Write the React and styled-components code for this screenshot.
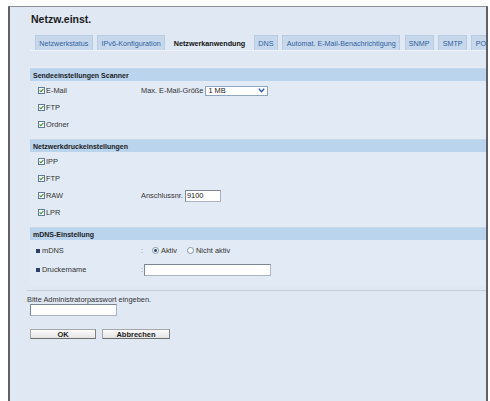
import styled, { createGlobalStyle } from "styled-components";

const GlobalStyle = createGlobalStyle`
  html, body {
    margin: 0;
    padding: 0;
    background: #ffffff;
  }
  body {
    font-family: "Liberation Sans", Arial, sans-serif;
    color: #1f1f1f;
  }
`;

const tabs = [
  "Netzwerkstatus",
  "IPv6-Konfiguration",
  "Netzwerkanwendung",
  "DNS",
  "Automat. E-Mail-Benachrichtigung",
  "SNMP",
  "SMTP",
  "POP3/IMAP4",
];

function Check() {
  return (
    <svg width="7" height="7" viewBox="0 0 7 7">
      <rect x="0.5" y="0.5" width="6" height="6" fill="#fff" stroke="#5f7d99" />
      <path d="M1.6 3.4 L2.9 4.8 L5.4 1.9" fill="none" stroke="#3d8a3a" strokeWidth="1.1" />
    </svg>
  );
}

function App() {
  return (
    <>
      <GlobalStyle />
      <Frame>
        <Title>Netzw.einst.</Title>
        <TabBar>
          {tabs.map((t) => (
            <Tab key={t} active={t === "Netzwerkanwendung"}>
              {t}
            </Tab>
          ))}
        </TabBar>

        <Panel>
          <SectionHead>Sendeeinstellungen Scanner</SectionHead>
          <SectionBody>
            <Row>
              <Lead>
                <Check />
                <span>E-Mail</span>
              </Lead>
              <Field>
                <span>Max. E-Mail-Größe</span>
                <Select>
                  <span>1 MB</span>
                  <svg width="7" height="5" viewBox="0 0 7 5">
                    <path d="M0.8 0.8 L3.5 3.8 L6.2 0.8" fill="none" stroke="#2a58a8" strokeWidth="1.4" />
                  </svg>
                </Select>
              </Field>
            </Row>
            <Row>
              <Lead>
                <Check />
                <span>FTP</span>
              </Lead>
            </Row>
            <Row>
              <Lead>
                <Check />
                <span>Ordner</span>
              </Lead>
            </Row>
          </SectionBody>

          <SectionHead>Netzwerkdruckeinstellungen</SectionHead>
          <SectionBody>
            <Row>
              <Lead>
                <Check />
                <span>IPP</span>
              </Lead>
            </Row>
            <Row>
              <Lead>
                <Check />
                <span>FTP</span>
              </Lead>
            </Row>
            <Row>
              <Lead>
                <Check />
                <span>RAW</span>
              </Lead>
              <Field>
                <span>Anschlussnr.</span>
                <TextBox width={36}>9100</TextBox>
              </Field>
            </Row>
            <Row>
              <Lead>
                <Check />
                <span>LPR</span>
              </Lead>
            </Row>
          </SectionBody>

          <SectionHead>mDNS-Einstellung</SectionHead>
          <SectionBody>
            <Row tall>
              <Lead bullet>
                <Bullet />
                <span>mDNS</span>
              </Lead>
              <Field>
                <Colon>:</Colon>
                <Radio checked />
                <span>Aktiv</span>
                <Radio />
                <span>Nicht aktiv</span>
              </Field>
            </Row>
            <Row tall>
              <Lead bullet>
                <Bullet />
                <span>Druckername</span>
              </Lead>
              <Field>
                <Colon>:</Colon>
                <TextBox width={127} />
              </Field>
            </Row>
          </SectionBody>
        </Panel>

        <Login>
          <Hint>Bitte Administratorpasswort eingeben.</Hint>
          <TextBox width={87} />
          <Buttons>
            <Button width={66}>OK</Button>
            <Button width={68}>Abbrechen</Button>
          </Buttons>
        </Login>
      </Frame>
    </>
  );
}

const Frame = styled.div`
  margin: 6px 2px 0 8px;
  min-height: 395px;
  box-sizing: border-box;
  border-top: 1px solid #8d9096;
  border-left: 2px solid #5e6166;
  border-right: 2px solid #5e6166;
  background: #dfe8f3;
  padding-left: 20px;
`;

const Title = styled.h1`
  margin: 0;
  padding: 6px 0 0 1px;
  font-size: 10.5px;
  line-height: 12px;
  font-weight: bold;
  color: #1a1a1a;
`;

const TabBar = styled.div`
  margin-top: 10px;
  display: flex;
  gap: 4.5px;
  padding-left: 5px;
  border-bottom: 1px solid #eef3f9;
  overflow: hidden;
  white-space: nowrap;
`;

const Tab = styled.div`
  flex: none;
  height: 15px;
  box-sizing: border-box;
  padding: 0 3.3px;
  display: flex;
  align-items: center;
  font-size: 7.2px;
  font-weight: ${(p) => (p.active ? "bold" : "normal")};
  color: ${(p) => (p.active ? "#111" : "#2f5f9e")};
  background: ${(p) => (p.active ? "transparent" : "#c7d8ec")};
  border: 1px solid ${(p) => (p.active ? "transparent" : "#b8cbe0")};
  border-bottom: none;
`;

const Panel = styled.div`
  margin-top: 15px;
  padding-top: 2px;
  background: #e1eaf5;
`;

const SectionHead = styled.div`
  height: 13px;
  box-sizing: border-box;
  padding-left: 3px;
  display: flex;
  align-items: center;
  background: #bad4ed;
  border-top: 1px solid #c8d7e8;
  font-size: 7px;
  font-weight: bold;
  color: #1b1b1b;
`;

const SectionBody = styled.div`
  padding: 1px 0 6px;
  font-size: 7.4px;
  color: #333;
`;

const Row = styled.div`
  display: flex;
  align-items: center;
  height: ${(p) => (p.tall ? "19px" : "17px")};
`;

const Lead = styled.div`
  width: 111px;
  flex: none;
  box-sizing: border-box;
  padding-left: ${(p) => (p.bullet ? "6px" : "8px")};
  display: flex;
  align-items: center;
  gap: ${(p) => (p.bullet ? "2px" : "1px")};

  svg {
    display: block;
  }
`;

const Field = styled.div`
  display: flex;
  align-items: center;
  gap: 2px;
`;

const Bullet = styled.span`
  width: 4px;
  height: 4px;
  background: #2c3f6e;
`;

const Colon = styled.span`
  width: 1px;
  color: #777;
`;

const Radio = styled.span`
  width: 7px;
  height: 7px;
  box-sizing: border-box;
  margin-left: 8px;
  border-radius: 50%;
  border: 1px solid #8097ad;
  background: ${(p) =>
    p.checked ? "radial-gradient(circle, #34507a 0 1.3px, #fff 1.6px)" : "#fff"};
`;

const Select = styled.div`
  width: 63px;
  height: 10px;
  box-sizing: border-box;
  padding: 0 2px;
  display: flex;
  align-items: center;
  justify-content: space-between;
  background: #fff;
  border: 1px solid #8ea6c0;
  color: #222;
`;

const TextBox = styled.div`
  width: ${(p) => p.width}px;
  height: 12px;
  box-sizing: border-box;
  padding-left: 1px;
  display: flex;
  align-items: center;
  background: #fff;
  border: 1px solid #a9b4c0;
  border-top-color: #7d8792;
  border-left-color: #7d8792;
  font-size: 7.4px;
  color: #222;
`;

const Login = styled.div`
  margin: 5px 0 0 -3px;
  padding: 4px 0 0 3px;
  border-top: 1px solid #c3cedb;
  font-size: 7.4px;
  color: #333;
`;

const Hint = styled.div`
  margin-left: -3px;
  line-height: 9px;
`;

const Buttons = styled.div`
  margin-top: 13px;
  display: flex;
  gap: 6px;
`;

const Button = styled.div`
  width: ${(p) => p.width}px;
  height: 10px;
  box-sizing: border-box;
  display: flex;
  align-items: center;
  justify-content: center;
  font-size: 7.5px;
  font-weight: bold;
  color: #222;
  background: linear-gradient(#fbfbfb, #e4e4e4);
  border: 1px solid #a7a7a7;
  border-bottom-color: #6f6f6f;
  border-right-color: #808080;
`;

export default App;
